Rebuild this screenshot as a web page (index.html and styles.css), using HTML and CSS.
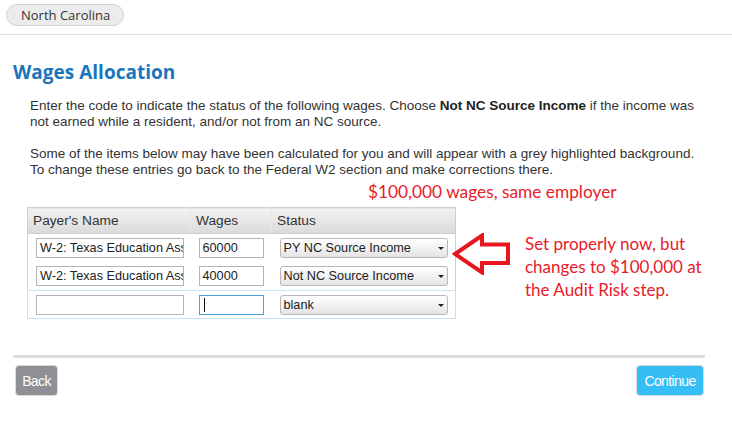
FILE: index.html
```html
<!DOCTYPE html>
<html>
<head>
<meta charset="utf-8">
<link rel="stylesheet" href="styles.css">
</head>
<body>
<div class="topbar">
  <span class="pill">North Carolina</span>
</div>
<div class="main">
  <h1 class="title">Wages Allocation</h1>
  <div class="intro">
    <p>Enter the code to indicate the status of the following wages. Choose <b>Not NC Source Income</b> if the income was not earned while a resident, and/or not from an NC source.</p>
    <p>Some of the items below may have been calculated for you and will appear with a grey highlighted background. To change these entries go back to the Federal W2 section and make corrections there.</p>
  </div>
  <div class="note-top">$100,000 wages, same employer</div>
  <div class="work">
    <table class="grid">
      <colgroup><col class="c1"><col class="c2"><col class="c3"></colgroup>
      <thead>
        <tr><th>Payer's Name</th><th>Wages</th><th>Status</th></tr>
      </thead>
      <tbody>
        <tr>
          <td><div class="inp name">W-2: Texas Education Ass</div></td>
          <td><div class="inp wage">60000</div></td>
          <td><div class="sel">PY NC Source Income<span class="caret"></span></div></td>
        </tr>
        <tr>
          <td><div class="inp name">W-2: Texas Education Ass</div></td>
          <td><div class="inp wage">40000</div></td>
          <td><div class="sel">Not NC Source Income<span class="caret"></span></div></td>
        </tr>
        <tr class="active">
          <td><div class="inp name"></div></td>
          <td><div class="inp wage focus"><span class="cursor"></span></div></td>
          <td><div class="sel">blank<span class="caret"></span></div></td>
        </tr>
      </tbody>
    </table>
    <svg class="arrow" width="60" height="42" viewBox="0 0 60 42">
      <polygon points="3,21 30,2.5 30,11.5 56,11.5 56,30 30,30 30,39.5" fill="none" stroke="#e8161f" stroke-width="4" stroke-linejoin="miter"/>
    </svg>
    <div class="note-side">Set properly now, but<br>changes to $100,000 at<br>the Audit Risk step.</div>
  </div>
  <div class="footer">
    <button class="btn back">Back</button>
    <button class="btn next">Continue</button>
  </div>
</div>
</body>
</html>
```

FILE: styles.css
```css
html, body {
  margin: 0;
  padding: 0;
  background: #fff;
}
body {
  font-family: "Liberation Sans", Arial, sans-serif;
  color: #333;
  width: 732px;
}
.topbar {
  height: 34px;
  border-bottom: 1px solid #dcdcdc;
  padding-left: 6px;
}
.pill {
  display: inline-block;
  margin-top: 4px;
  height: 20px;
  line-height: 20px;
  padding: 0 13px 0 14px;
  border: 1px solid #d4d4d4;
  border-radius: 11px;
  background: #ececec;
  font-family: "Open Sans", sans-serif;
  font-size: 13px;
  color: #333;
}
.main {
  padding: 0 27px 0 13px;
}
.title {
  margin: 25px 0 0 0;
  font-family: "Open Sans", sans-serif;
  font-weight: 700;
  font-size: 19px;
  line-height: 24px;
  color: #1b75bc;
}
.intro {
  margin-top: 14px;
  padding-left: 17px;
  padding-right: 2px;
  font-size: 13.5px;
  line-height: 16px;
  color: #333;
}
.intro p {
  margin: 0 0 16px 0;
}
.intro p:last-child {
  margin-bottom: 0;
}
.intro b {
  color: #222;
}
.note-top {
  margin: 4px 0 0 355px;
  font-family: Lato, "Open Sans", sans-serif;
  font-size: 17.3px;
  line-height: 20px;
  color: #e8202a;
  white-space: nowrap;
}
.work {
  margin-top: 5px;
  margin-left: 14px;
  display: flex;
  align-items: flex-start;
}
.grid {
  border-collapse: collapse;
  table-layout: fixed;
  width: 428px;
  border: 1px solid #cfcfcf;
  flex: none;
}
.c1 { width: 163px; }
.c2 { width: 81px; }
.c3 { width: 184px; }
.grid th {
  height: 25px;
  padding: 0 5px;
  text-align: left;
  font-weight: normal;
  font-size: 13.7px;
  color: #333;
  background: linear-gradient(#f2f2f2, #dadada);
  border-left: 1px solid #e6e6e6;
  border-bottom: 1px solid #cfcfcf;
}
.grid th:first-child {
  border-left: none;
}
.grid td {
  height: 28px;
  padding: 0 0 0 8px;
  vertical-align: middle;
}
.grid tr.active td {
  border-top: 1px solid #c8e2f2;
  border-bottom: 1px solid #c8e2f2;
  height: 27px;
}
.grid tr.active td:first-child { border-left: 1px solid #c8e2f2; }
.grid tr.active td:last-child { border-right: 1px solid #c8e2f2; }
.inp {
  box-sizing: border-box;
  height: 20px;
  border: 1px solid #b4b4b4;
  background: #fff;
  font-size: 12.7px;
  line-height: 18px;
  padding-left: 3px;
  color: #222;
  overflow: hidden;
  white-space: nowrap;
}
.inp.name { width: 148px; }
.inp.wage { width: 65px; }
.inp.focus {
  border-color: #4d9fd8;
  position: relative;
}
.cursor {
  position: absolute;
  left: 4px;
  top: 2px;
  width: 1px;
  height: 14px;
  background: #111;
}
.sel {
  box-sizing: border-box;
  position: relative;
  width: 168px;
  height: 20px;
  border: 1px solid #b8b8b8;
  border-radius: 3px;
  background: linear-gradient(#ffffff, #e4e4e4);
  font-size: 12.7px;
  line-height: 18px;
  padding-left: 3px;
  color: #222;
  white-space: nowrap;
}
.caret {
  position: absolute;
  right: 3px;
  top: 8px;
  width: 0;
  height: 0;
  border-left: 3px solid transparent;
  border-right: 3px solid transparent;
  border-top: 3px solid #222;
}
.arrow {
  display: block;
  flex: none;
  margin-top: 26px;
  margin-left: -4px;
}
.note-side {
  margin-left: 13px;
  margin-top: 25px;
  font-family: Lato, "Open Sans", sans-serif;
  font-size: 17px;
  line-height: 23px;
  color: #e8202a;
  white-space: nowrap;
}
.footer {
  margin-top: 36px;
  border-top: 3px solid #dedede;
  padding-top: 7px;
  display: flex;
  justify-content: space-between;
  padding-left: 2px;
  padding-right: 1px;
}
.btn {
  height: 31px;
  border: 1px solid #d8d8d8;
  border-radius: 4px;
  color: #fff;
  font-family: "Liberation Sans", sans-serif;
  font-size: 14px;
  letter-spacing: -0.6px;
  padding: 0;
  cursor: pointer;
}
.back {
  width: 43px;
  background: #8e9096;
}
.next {
  width: 68px;
  background: #35bef5;
}
```
